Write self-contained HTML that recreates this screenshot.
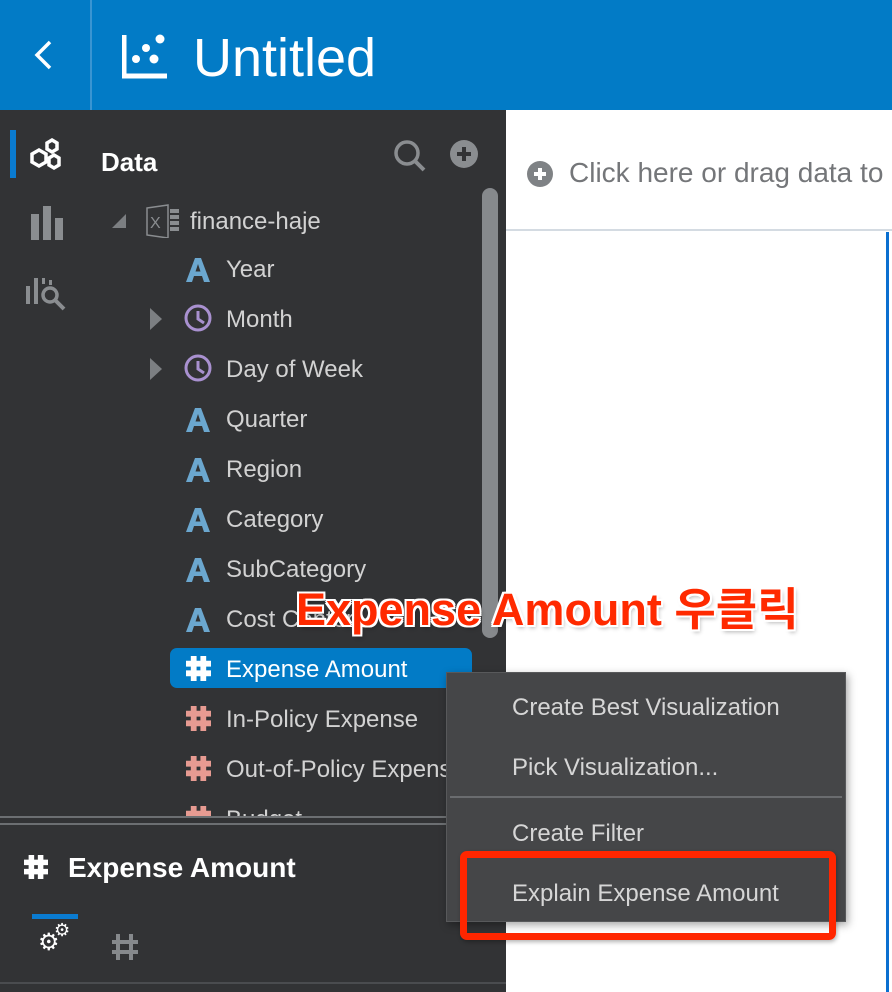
<!DOCTYPE html>
<html><head><meta charset="utf-8"><style>
*{margin:0;padding:0;box-sizing:border-box}
body{width:892px;height:992px;overflow:hidden;position:relative;background:#fff;font-family:"Liberation Sans","Noto Sans CJK KR",sans-serif}
.abs{position:absolute}
.hdr{left:0;top:0;width:892px;height:110px;background:#027bc6}
.left{left:0;top:110px;width:506px;height:882px;background:#323335}
.t{position:absolute;color:#d2d2d2;font-size:24px;line-height:30px;white-space:nowrap}
.mi{position:absolute;left:512px;color:#d6d6d6;font-size:24px;line-height:30px;white-space:nowrap}
</style></head><body>
<svg width="0" height="0" style="position:absolute"><defs>
<symbol id="A" viewBox="0 0 26 26"><path d="M1 25 L10 1 H16 L25 25 H19 L17 19 H9 L7 25 Z M10.5 14.5 H15.5 L13 7 Z" fill="#6ba7cf" fill-rule="evenodd"/></symbol>
<symbol id="H" viewBox="0 0 26 26"><path d="M5 0 H11 V5 H15 V0 H21 V5 H26 V11 H21 V15 H26 V21 H21 V26 H15 V21 H11 V26 H5 V21 H0 V15 H5 V11 H0 V5 H5 Z M11 11 V15 H15 V11 Z" fill-rule="evenodd"/></symbol>
</defs></svg>
<div class="abs hdr"></div>
<div class="abs" style="left:90px;top:0;width:2px;height:110px;background:#3a95d2"></div>
<svg class="abs" style="left:30px;top:38px" width="28" height="36"><path d="M20 4 L7 17 L20 30" stroke="#fff" stroke-width="3.5" fill="none"/></svg>
<svg class="abs" style="left:122px;top:33px" width="46" height="46"><path d="M2 2 V43 H45" stroke="#fff" stroke-width="5" fill="none"/><circle cx="38" cy="6" r="4.5" fill="#fff"/><circle cx="24" cy="15" r="4" fill="#fff"/><circle cx="14" cy="26" r="4" fill="#fff"/><circle cx="32" cy="26" r="4.5" fill="#fff"/></svg>
<div class="abs" style="left:193px;top:26px;color:#fff;font-size:54px;line-height:64px">Untitled</div>
<div class="abs left"></div>
<div class="abs" style="left:10px;top:130px;width:6px;height:48px;background:#0a7bd0"></div>
<svg class="abs" style="left:28px;top:136px" width="36" height="36"><g stroke="#fff" stroke-width="3.5" fill="none"><polygon points="24,4 29,7 29,13 24,16 19,13 19,7"/><polygon points="11,14 18,18 18,26 11,30 4,26 4,18"/><polygon points="26,19 31,22 31,29 26,32 21,29 21,22"/></g></svg>
<svg class="abs" style="left:30px;top:206px" width="34" height="34"><rect x="1" y="8" width="8" height="26" fill="#8a8d90"/><rect x="13" y="0" width="8" height="34" fill="#8a8d90"/><rect x="25" y="12" width="8" height="22" fill="#8a8d90"/></svg>
<svg class="abs" style="left:24px;top:274px" width="44" height="38"><g fill="#8a8d90"><rect x="2" y="12" width="4" height="18"/><rect x="10" y="4" width="4" height="26"/><rect x="18" y="4" width="3" height="6"/><rect x="25" y="6" width="3" height="5"/></g><circle cx="26" cy="21" r="7" stroke="#8a8d90" stroke-width="3.5" fill="none"/><path d="M31 26 L40 35" stroke="#8a8d90" stroke-width="4"/></svg>
<div class="abs" style="left:101px;top:146px;color:#fff;font-weight:bold;font-size:26px;line-height:32px">Data</div>
<svg class="abs" style="left:392px;top:138px" width="36" height="34"><circle cx="15" cy="15" r="11" stroke="#8a8d90" stroke-width="3.5" fill="none"/><path d="M23 23 L32 32" stroke="#8a8d90" stroke-width="4"/></svg>
<svg class="abs" style="left:450px;top:140px" width="28" height="28"><circle cx="14" cy="14" r="14" fill="#8a8d90"/><path d="M14 7 V21 M7 14 H21" stroke="#323335" stroke-width="4"/></svg>
<div class="abs" style="left:482px;top:188px;width:16px;height:450px;border-radius:8px;background:#86898c"></div>
<svg class="abs" style="left:110px;top:212px" width="18" height="18"><polygon points="16,2 16,16 2,16" fill="#7c7f82"/></svg>
<svg class="abs" style="left:146px;top:204px" width="34" height="34"><path d="M1 4 L22 1 V34 L1 31 Z" fill="none" stroke="#8a8d90" stroke-width="1.5"/><text x="4" y="24" fill="#8a8d90" font-size="16" font-family="Liberation Sans">X</text><g fill="#8a8d90"><rect x="24" y="5" width="9" height="4"/><rect x="24" y="11" width="9" height="4"/><rect x="24" y="17" width="9" height="4"/><rect x="24" y="23" width="9" height="4"/></g></svg>
<div class="t" style="left:190px;top:207px">finance-haje</div>
<svg class="abs" style="left:185px;top:257px" width="26" height="26"><use href="#A"/></svg><div class="t" style="left:226px;top:255px">Year</div>
<svg class="abs" style="left:148px;top:306px" width="16" height="26"><polygon points="2,2 14,13 2,24" fill="#7c7f82"/></svg>
<svg class="abs" style="left:183px;top:303px" width="30" height="30"><circle cx="15" cy="15" r="12" stroke="#a991d0" stroke-width="3" fill="none"/><path d="M15 8 V16 L21 20" stroke="#a991d0" stroke-width="3" fill="none"/></svg>
<div class="t" style="left:226px;top:305px">Month</div>
<svg class="abs" style="left:148px;top:356px" width="16" height="26"><polygon points="2,2 14,13 2,24" fill="#7c7f82"/></svg>
<svg class="abs" style="left:183px;top:353px" width="30" height="30"><circle cx="15" cy="15" r="12" stroke="#a991d0" stroke-width="3" fill="none"/><path d="M15 8 V16 L21 20" stroke="#a991d0" stroke-width="3" fill="none"/></svg>
<div class="t" style="left:226px;top:355px">Day of Week</div>
<svg class="abs" style="left:185px;top:407px" width="26" height="26"><use href="#A"/></svg><div class="t" style="left:226px;top:405px">Quarter</div>
<svg class="abs" style="left:185px;top:457px" width="26" height="26"><use href="#A"/></svg><div class="t" style="left:226px;top:455px">Region</div>
<svg class="abs" style="left:185px;top:507px" width="26" height="26"><use href="#A"/></svg><div class="t" style="left:226px;top:505px">Category</div>
<svg class="abs" style="left:185px;top:557px" width="26" height="26"><use href="#A"/></svg><div class="t" style="left:226px;top:555px">SubCategory</div>
<svg class="abs" style="left:185px;top:607px" width="26" height="26"><use href="#A"/></svg><div class="t" style="left:226px;top:605px">Cost Center</div>
<div class="abs" style="left:170px;top:648px;width:302px;height:40px;border-radius:7px;background:#027bc6"></div>
<svg class="abs" style="left:186px;top:656px;fill:#fff" width="25" height="25"><use href="#H"/></svg><div class="t" style="left:226px;top:655px;color:#fff">Expense Amount</div>
<svg class="abs" style="left:186px;top:706px;fill:#e79b92" width="25" height="25"><use href="#H"/></svg><div class="t" style="left:226px;top:705px">In-Policy Expense</div>
<svg class="abs" style="left:186px;top:756px;fill:#e79b92" width="25" height="25"><use href="#H"/></svg><div class="t" style="left:226px;top:755px">Out-of-Policy Expense</div>
<div class="abs" style="left:186px;top:806px;width:300px;height:10px;overflow:hidden"><svg class="abs" style="left:0;top:0;fill:#e79b92" width="25" height="25"><use href="#H"/></svg><div class="t" style="left:40px;top:-1px">Budget</div></div>
<div class="abs" style="left:0;top:816px;width:506px;height:2px;background:#6c6f72"></div>
<div class="abs" style="left:0;top:823px;width:506px;height:2px;background:#6c6f72"></div>
<div class="abs" style="left:0;top:826px;width:506px;height:166px;background:#323335"></div>
<svg class="abs" style="left:24px;top:855px;fill:#fff" width="24" height="24"><use href="#H"/></svg>
<div class="abs" style="left:68px;top:852px;color:#fff;font-weight:bold;font-size:28px;line-height:32px;white-space:nowrap">Expense Amount</div>
<div class="abs" style="left:32px;top:914px;width:46px;height:5px;background:#0a7bd0"></div>
<div class="abs" style="left:38px;top:930px;color:#fff;font-size:24px;line-height:26px">⚙</div><div class="abs" style="left:54px;top:920px;color:#fff;font-size:18px;line-height:20px">⚙</div>
<svg class="abs" style="left:112px;top:934px;fill:#86898c" width="26" height="26"><path d="M4 0 H8 V26 H4 Z M17 0 H21 V26 H17 Z M0 6 H26 V10 H0 Z M0 16 H26 V20 H0 Z"/></svg>
<div class="abs" style="left:0;top:982px;width:506px;height:2px;background:#4a4c4f"></div>
<svg class="abs" style="left:526px;top:160px" width="30" height="30"><circle cx="14" cy="14" r="13" fill="#7f8285"/><path d="M14 8 V20 M8 14 H20" stroke="#fff" stroke-width="4"/></svg>
<div class="abs" style="left:569px;top:156px;color:#747679;font-size:28px;line-height:34px;white-space:nowrap">Click here or drag data to</div>
<div class="abs" style="left:506px;top:229px;width:386px;height:2px;background:#d4dbe2"></div>
<div class="abs" style="left:886px;top:232px;width:3px;height:760px;background:#0a6fd0"></div>
<div class="abs" style="left:446px;top:672px;width:400px;height:250px;background:#454648;border:1px solid #58595b;box-shadow:2px 3px 8px rgba(0,0,0,.35)"></div>
<div class="mi" style="top:693px">Create Best Visualization</div>
<div class="mi" style="top:753px">Pick Visualization...</div>
<div class="abs" style="left:450px;top:796px;width:392px;height:2px;background:#6a6c6f"></div>
<div class="mi" style="top:819px">Create Filter</div>
<div class="mi" style="top:879px">Explain Expense Amount</div>
<div class="abs" style="left:460px;top:851px;width:376px;height:89px;border:7px solid #ff2600;border-radius:7px;box-shadow:1px 2px 4px rgba(0,0,0,.3)"></div>
<div class="abs" style="left:296px;top:583px;color:#ff2a00;font-weight:bold;font-size:45px;line-height:54px;white-space:nowrap;text-shadow:-2px -2px 0 #fff,2px -2px 0 #fff,-2px 2px 0 #fff,2px 2px 0 #fff,0 2px 0 #fff,0 -2px 0 #fff,2px 0 0 #fff,-2px 0 0 #fff,2px 3px 4px rgba(0,0,0,.3)">Expense Amount 우클릭</div>
</body></html>
